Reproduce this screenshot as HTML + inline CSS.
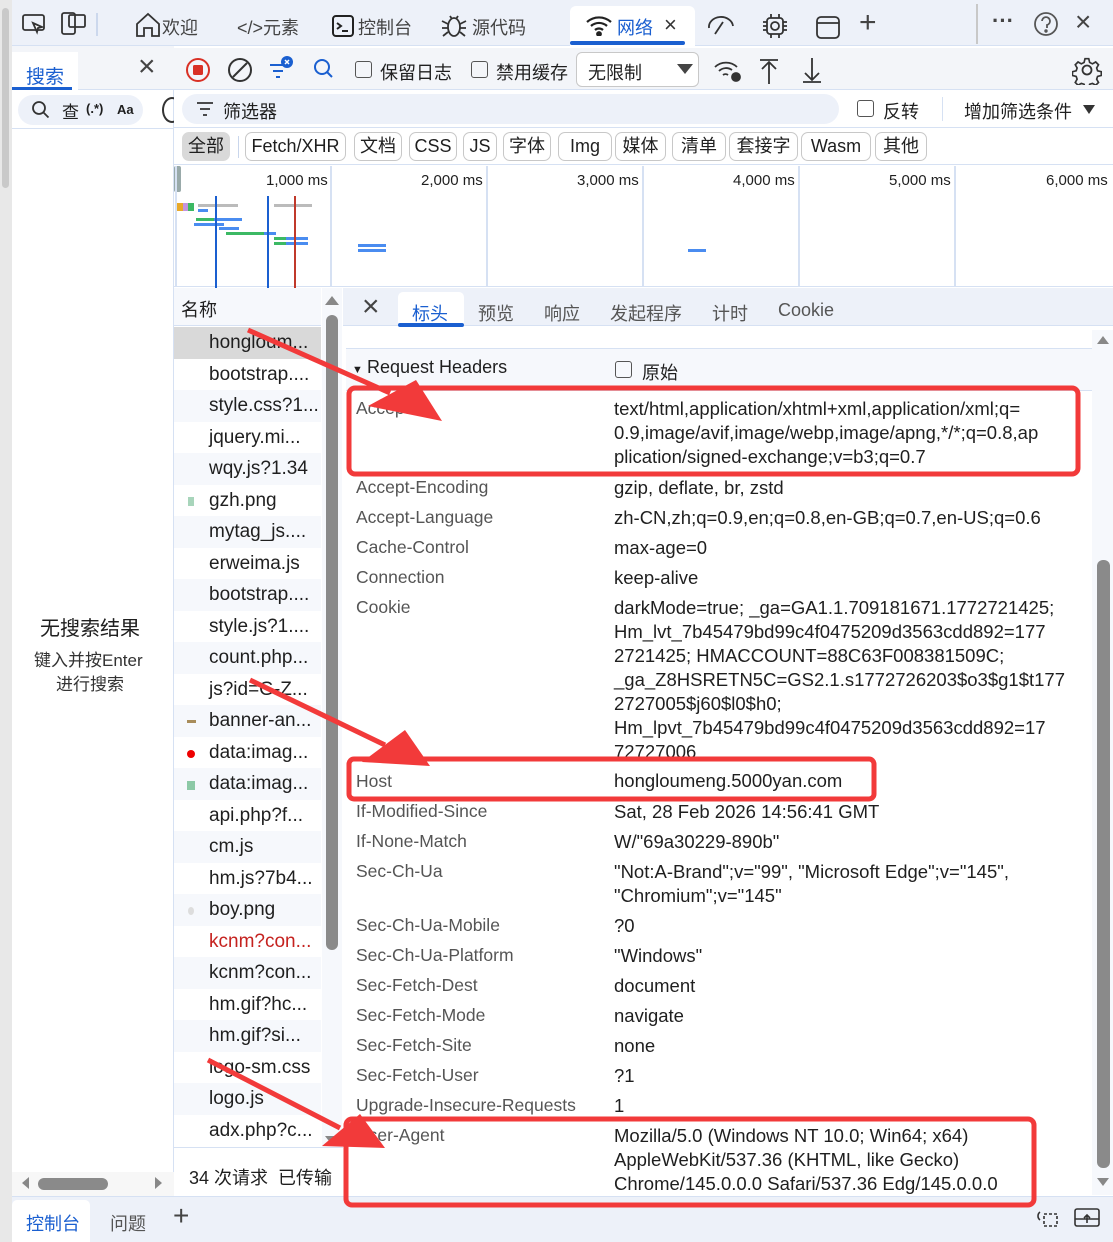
<!DOCTYPE html>
<html><head><meta charset="utf-8">
<style>
*{margin:0;padding:0;box-sizing:border-box}
body{width:1113px;height:1242px;overflow:hidden;background:#fff;font-family:"Liberation Sans","Noto Sans CJK SC",sans-serif;color:#1f1f1f;position:relative}
.a{position:absolute;white-space:nowrap}
.f18{font-size:18px}
.chip{position:absolute;top:132px;height:29px;border:1px solid #c8c8c8;border-radius:7px;font-size:18px;line-height:27px;text-align:center;background:#fff}
.row{position:absolute;left:174px;width:147px;height:31.5px;font-size:19px;line-height:31px;padding-left:35px}
.k{position:absolute;left:356px;font-size:17.5px;color:#555}
.v{position:absolute;left:614px;font-size:18.5px;color:#1f1f1f;line-height:24px}
</style></head><body>
<div class="a" style="left:0;top:0;width:1113px;height:46px;background:#edf1f9;border-bottom:1px solid #d6e1f3"></div>
<div class="a" style="left:0;top:0;width:12px;height:1242px;background:#e8e8e8"></div>
<div class="a" style="left:2px;top:8px;width:7px;height:180px;background:#c9c9c9;border-radius:4px"></div>
<svg class="a" style="left:20px;top:10px" width="120" height="30" fill="none" stroke="#333" stroke-width="1.8">
<rect x="3" y="5" width="21" height="15" rx="2"/><path d="M13 13l9 4-4 1-1 4z" fill="#fff"/>
<rect x="42" y="3" width="13" height="21" rx="2"/><rect x="49" y="5" width="16" height="12" rx="1.5"/>
<line x1="77" y1="3" x2="77" y2="26" stroke="#c9d6ec"/>
</svg>
<svg class="a" style="left:134px;top:11px" width="28" height="28" fill="none" stroke="#333" stroke-width="1.8"><path d="M3 13L14 3l11 10v12h-7v-8h-8v8H3z"/></svg>
<div class="a f18" style="left:162px;top:14px;color:#444">欢迎</div>
<div class="a f18" style="left:237px;top:14px;color:#444">&lt;/&gt;元素</div>
<svg class="a" style="left:330px;top:13px" width="26" height="26" fill="none" stroke="#222" stroke-width="2"><rect x="3" y="3" width="20" height="20" rx="3"/><path d="M7 10l4 3-4 3M12 18h6"/></svg>
<div class="a f18" style="left:358px;top:14px;color:#444">控制台</div>
<svg class="a" style="left:440px;top:12px" width="28" height="28" fill="none" stroke="#333" stroke-width="1.8"><ellipse cx="14" cy="15" rx="6" ry="9"/><path d="M2 9l6 3M2 16h6M3 24l5-4M26 9l-6 3M26 16h-6M25 24l-5-4M10 4l2 3M18 4l-2 3"/></svg>
<div class="a f18" style="left:472px;top:14px;color:#444">源代码</div>
<div class="a" style="left:570px;top:6px;width:125px;height:42px;background:#fff;border-radius:6px 6px 0 0"></div>
<div class="a" style="left:570px;top:41px;width:115px;height:4px;background:#1a5fd0;border-radius:2px"></div>
<svg class="a" style="left:585px;top:14px" width="30" height="22" fill="none" stroke="#222" stroke-width="2.2"><path d="M2 8a18 18 0 0 1 24 0M6 12a12 12 0 0 1 16 0M10 16a6 6 0 0 1 8 0"/><circle cx="14" cy="20" r="1.8" fill="#222"/></svg>
<div class="a f18" style="left:617px;top:14px;color:#1a5fd0">网络</div>
<div class="a" style="left:664px;top:12px;font-size:22px;color:#333">×</div>
<svg class="a" style="left:705px;top:12px" width="150" height="28" fill="none" stroke="#333" stroke-width="1.8">
<path d="M4 16a12 10 0 0 1 24-2M10 22l8-12"/>
<rect x="62" y="6" width="16" height="16" rx="3"/><circle cx="70" cy="14" r="4"/><path d="M58 10h4M58 14h4M58 18h4M78 10h4M78 14h4M78 18h4M66 2v4M74 2v4M66 22v4M74 22v4"/>
<rect x="112" y="5" width="22" height="21" rx="4"/><path d="M112 11h22"/>
</svg>
<div class="a" style="left:859px;top:6px;font-size:30px;color:#444;font-weight:300">+</div>
<div class="a" style="left:976px;top:4px;width:2px;height:40px;background:#c8c8c8"></div>
<div class="a" style="left:992px;top:8px;font-size:22px;color:#444;font-weight:bold">···</div>
<svg class="a" style="left:1032px;top:10px" width="28" height="28" fill="none" stroke="#555" stroke-width="1.8"><circle cx="14" cy="14" r="11"/><path d="M10 11a4 4 0 1 1 5 4v3"/><circle cx="14" cy="21" r=".8"/></svg>
<div class="a" style="left:1075px;top:6px;font-size:28px;color:#444">×</div>

<div class="a" style="left:12px;top:48px;width:162px;height:1150px;background:#fff;border-right:1px solid #d6e1f3"></div>
<div class="a" style="left:12px;top:46px;width:162px;height:44px;background:#f3f5f9;border-bottom:1px solid #d6e1f3"></div>
<div class="a" style="left:12px;top:52px;width:66px;height:38px;background:#fff"></div>
<div class="a f18" style="left:26px;top:62px;color:#1a5fd0;font-size:19px">搜索</div>
<div class="a" style="left:12px;top:87px;width:60px;height:3px;background:#1a5fd0"></div>
<div class="a" style="left:138px;top:50px;font-size:30px;color:#444">×</div>
<div class="a" style="left:18px;top:95px;width:125px;height:30px;background:#edf1f9;border-radius:15px"></div>
<svg class="a" style="left:30px;top:99px" width="22" height="22" fill="none" stroke="#333" stroke-width="1.8"><circle cx="9" cy="9" r="6"/><path d="M13.5 13.5l5 5"/></svg>
<div class="a" style="left:62px;top:98px;font-size:17px">查</div>
<div class="a" style="left:86px;top:101px;font-size:13px;font-weight:bold">(.*)</div>
<div class="a" style="left:117px;top:102px;font-size:13px;font-weight:bold">Aa</div>
<div class="a" style="left:162px;top:97px;width:20px;height:26px;border:2px solid #333;border-radius:50%"></div>
<div class="a" style="left:12px;top:128px;width:162px;height:1px;background:#d6e1f3"></div>
<div class="a" style="left:40px;top:612px;font-size:20px">无搜索结果</div>
<div class="a" style="left:34px;top:646px;font-size:17px;color:#333">键入并按Enter</div>
<div class="a" style="left:56px;top:670px;font-size:17px;color:#333">进行搜索</div>
<div class="a" style="left:12px;top:1172px;width:162px;height:24px;background:#f7f7f7"></div>
<div class="a" style="left:22px;top:1177px;width:0;height:0;border:6px solid transparent;border-right:7px solid #888;border-left:0"></div>
<div class="a" style="left:38px;top:1178px;width:70px;height:12px;background:#8a8a8a;border-radius:6px"></div>
<div class="a" style="left:155px;top:1177px;width:0;height:0;border:6px solid transparent;border-left:7px solid #888;border-right:0"></div>

<div class="a" style="left:174px;top:48px;width:939px;height:42px;background:#f3f5f9;border-bottom:1px solid #d6e1f3"></div>
<svg class="a" style="left:184px;top:55px" width="150" height="30" fill="none" stroke-width="2">
<circle cx="14" cy="15" r="11" stroke="#d93025"/><rect x="9" y="10" width="10" height="10" rx="1.5" fill="#d93025"/>
<circle cx="56" cy="15" r="11" stroke="#333"/><path d="M49 22l14-14" stroke="#333"/>
<path d="M86 10h16M89 16h10M92 22h4" stroke="#1a5fd0"/><circle cx="103" cy="7" r="6" fill="#1a5fd0"/><path d="M101 5l4 4M105 5l-4 4" stroke="#fff" stroke-width="1.5"/>
<circle cx="138" cy="12" r="7" stroke="#1a5fd0"/><path d="M143 17l5 5" stroke="#1a5fd0"/>
</svg>
<div class="a" style="left:355px;top:61px;width:17px;height:17px;border:1.5px solid #555;border-radius:3px"></div>
<div class="a f18" style="left:380px;top:59px">保留日志</div>
<div class="a" style="left:471px;top:61px;width:17px;height:17px;border:1.5px solid #555;border-radius:3px"></div>
<div class="a f18" style="left:496px;top:59px">禁用缓存</div>
<div class="a" style="left:576px;top:52px;width:123px;height:35px;border:1px solid #c8c8c8;border-radius:6px;background:#fff"></div>
<div class="a f18" style="left:588px;top:59px">无限制</div>
<div class="a" style="left:677px;top:64px;border:8px solid transparent;border-top:10px solid #444;border-bottom:0"></div>
<svg class="a" style="left:712px;top:56px" width="120" height="30" fill="none" stroke="#333" stroke-width="1.8">
<path d="M3 11a16 16 0 0 1 22 0M7 15a10 10 0 0 1 13-1M11 19a4 4 0 0 1 5 0"/><circle cx="24" cy="21" r="4" fill="#333"/>
<path d="M48 4h18M57 6v22M50 13l7-7 7 7"/>
<path d="M91 26h18M100 2v22M93 17l7 7 7-7"/>
</svg>
<svg class="a" style="left:1072px;top:55px" width="30" height="30" fill="none" stroke="#333" stroke-width="1.8"><circle cx="15" cy="15" r="4.5"/><path d="M13 3h4l1 4 3 1.5 3.5-2 3 3-2 3.5 1 3 4 1v4l-4 1-1 3 2 3.5-3 3-3.5-2-3 1-1 4h-4l-1-4-3-1-3.5 2-3-3 2-3.5-1-3-4-1v-4l4-1 1-3-2-3.5 3-3 3.5 2 3-1.5z" transform="scale(.93) translate(1 1)"/></svg>

<div class="a" style="left:174px;top:90px;width:939px;height:38px;background:#fff;border-bottom:1px solid #d6e1f3"></div>
<div class="a" style="left:182px;top:94px;width:657px;height:30px;background:#edf1f9;border-radius:15px"></div>
<svg class="a" style="left:195px;top:100px" width="20" height="18" stroke="#333" stroke-width="1.8"><path d="M2 3h16M5 9h10M8 15h4"/></svg>
<div class="a f18" style="left:223px;top:98px">筛选器</div>
<div class="a" style="left:857px;top:100px;width:17px;height:17px;border:1.5px solid #555;border-radius:3px"></div>
<div class="a f18" style="left:883px;top:98px">反转</div>
<div class="a" style="left:942px;top:97px;width:1px;height:24px;background:#d6e1f3"></div>
<div class="a f18" style="left:964px;top:98px">增加筛选条件</div>
<div class="a" style="left:1083px;top:105px;border:6px solid transparent;border-top:9px solid #333;border-bottom:0"></div>

<div class="a" style="left:174px;top:128px;width:939px;height:37px;background:#fff;border-bottom:1px solid #d6e1f3"></div>
<div class="chip" style="left:182px;width:48px;background:#d9d9d9;border-color:#d9d9d9">全部</div>
<div class="a" style="left:238px;top:136px;width:1px;height:22px;background:#c9d6ec"></div>
<div class="chip" style="left:245px;width:101px">Fetch/XHR</div>
<div class="chip" style="left:354px;width:48px">文档</div>
<div class="chip" style="left:409px;width:48px">CSS</div>
<div class="chip" style="left:463px;width:34px">JS</div>
<div class="chip" style="left:503px;width:48px">字体</div>
<div class="chip" style="left:558px;width:54px">Img</div>
<div class="chip" style="left:615px;width:51px">媒体</div>
<div class="chip" style="left:672px;width:54px">清单</div>
<div class="chip" style="left:729px;width:69px">套接字</div>
<div class="chip" style="left:801px;width:70px">Wasm</div>
<div class="chip" style="left:875px;width:52px">其他</div>

<div class="a" style="left:174px;top:166px;width:939px;height:121px;background:#fff;border-bottom:1px solid #d6e1f3"></div>
<div class="a" style="left:174px;top:166px;width:7px;height:26px;background:#9aa;border-radius:2px"></div>
<div class="a" style="left:330px;top:166px;width:2px;height:121px;background:#d6e1f3"></div>
<div class="a" style="left:486px;top:166px;width:2px;height:121px;background:#d6e1f3"></div>
<div class="a" style="left:642px;top:166px;width:2px;height:121px;background:#d6e1f3"></div>
<div class="a" style="left:798px;top:166px;width:2px;height:121px;background:#d6e1f3"></div>
<div class="a" style="left:954px;top:166px;width:2px;height:121px;background:#d6e1f3"></div>
<div class="a" style="left:175px;top:166px;width:2px;height:121px;background:#d6e1f3"></div>
<div class="a" style="left:266px;top:172px;font-size:15px">1,000 ms</div>
<div class="a" style="left:421px;top:172px;font-size:15px">2,000 ms</div>
<div class="a" style="left:577px;top:172px;font-size:15px">3,000 ms</div>
<div class="a" style="left:733px;top:172px;font-size:15px">4,000 ms</div>
<div class="a" style="left:889px;top:172px;font-size:15px">5,000 ms</div>
<div class="a" style="left:1046px;top:172px;font-size:15px">6,000 ms</div>
<svg class="a" style="left:174px;top:196px" width="150" height="92">
<rect x="3" y="7" width="6" height="8" fill="#e8a92a"/><rect x="9" y="7" width="5" height="8" fill="#c493e0"/><rect x="14" y="7" width="6" height="8" fill="#3cb964"/>
<rect x="24" y="8" width="40" height="3" fill="#bbb"/><rect x="24" y="13" width="10" height="3" fill="#4a8cf0"/>
<rect x="100" y="8" width="38" height="3" fill="#bbb"/>
<rect x="22" y="22" width="45" height="3" fill="#3cb964"/><rect x="40" y="22" width="28" height="3" fill="#4a8cf0"/>
<rect x="20" y="27" width="30" height="3" fill="#4a8cf0"/>
<rect x="45" y="31" width="20" height="3" fill="#4a8cf0"/>
<rect x="52" y="36" width="50" height="3" fill="#3cb964"/><rect x="90" y="36" width="12" height="3" fill="#4a8cf0"/>
<rect x="100" y="41" width="12" height="3" fill="#3cb964"/><rect x="112" y="41" width="22" height="3" fill="#4a8cf0"/>
<rect x="100" y="46" width="12" height="3" fill="#3cb964"/><rect x="112" y="46" width="22" height="3" fill="#4a8cf0"/>
<rect x="41" y="0" width="2" height="92" fill="#1a5fd0"/><rect x="93" y="0" width="2" height="92" fill="#1a5fd0"/><rect x="120" y="0" width="2" height="92" fill="#c0392b"/>
</svg>
<div class="a" style="left:358px;top:244px;width:28px;height:3px;background:#4a8cf0"></div>
<div class="a" style="left:358px;top:249px;width:28px;height:3px;background:#4a8cf0"></div>
<div class="a" style="left:688px;top:249px;width:18px;height:3px;background:#4a8cf0"></div>

<div class="a" style="left:174px;top:288px;width:168px;height:870px;background:#fff;border-right:1px solid #d6e1f3"></div>
<div class="a" style="left:174px;top:288px;width:147px;height:38px;background:#f6f8fc;border-bottom:1px solid #d6e1f3"></div>
<div class="a f18" style="left:181px;top:296px">名称</div>
<div class="a" style="left:322px;top:288px;width:20px;height:870px;background:#f6f8fc"></div>
<div class="a" style="left:325px;top:296px;border:7px solid transparent;border-bottom:9px solid #888;border-top:0"></div>
<div class="a" style="left:326px;top:315px;width:12px;height:635px;background:#8a8a8a;border-radius:6px"></div>
<div class="a" style="left:325px;top:1136px;border:7px solid transparent;border-top:9px solid #888;border-bottom:0"></div>
<div class="row" style="top:327px;background:#d9d9d9">hongloum...</div>
<div class="row" style="top:358.5px">bootstrap....</div>
<div class="row" style="top:390px;background:#f6f8fc">style.css?1...</div>
<div class="row" style="top:421.5px">jquery.mi...</div>
<div class="row" style="top:453px;background:#f6f8fc">wqy.js?1.34</div>
<div class="row" style="top:484.5px">gzh.png</div>
<div class="row" style="top:516px;background:#f6f8fc">mytag_js....</div>
<div class="row" style="top:547.5px">erweima.js</div>
<div class="row" style="top:579px;background:#f6f8fc">bootstrap....</div>
<div class="row" style="top:610.5px">style.js?1....</div>
<div class="row" style="top:642px;background:#f6f8fc">count.php...</div>
<div class="row" style="top:673.5px">js?id=G-Z...</div>
<div class="row" style="top:705px;background:#f6f8fc">banner-an...</div>
<div class="row" style="top:736.5px">data:imag...</div>
<div class="row" style="top:768px;background:#f6f8fc">data:imag...</div>
<div class="row" style="top:799.5px">api.php?f...</div>
<div class="row" style="top:831px;background:#f6f8fc">cm.js</div>
<div class="row" style="top:862.5px">hm.js?7b4...</div>
<div class="row" style="top:894px;background:#f6f8fc">boy.png</div>
<div class="row" style="top:925.5px;color:#c5221f">kcnm?con...</div>
<div class="row" style="top:957px;background:#f6f8fc">kcnm?con...</div>
<div class="row" style="top:988.5px">hm.gif?hc...</div>
<div class="row" style="top:1020px;background:#f6f8fc">hm.gif?si...</div>
<div class="row" style="top:1051.5px">logo-sm.css</div>
<div class="row" style="top:1083px;background:#f6f8fc">logo.js</div>
<div class="row" style="top:1114.5px">adx.php?c...</div>
<div class="a" style="left:188px;top:497px;width:6px;height:9px;background:#a8d5bb"></div>
<div class="a" style="left:187px;top:720px;width:9px;height:3px;background:#a88c5a"></div>
<div class="a" style="left:187px;top:750px;width:8px;height:8px;background:#e00;border-radius:50%"></div>
<div class="a" style="left:187px;top:781px;width:8px;height:9px;background:#8cc9a6"></div>
<div class="a" style="left:188px;top:907px;width:6px;height:8px;background:#ddd;border-radius:50%"></div>
<div class="a" style="left:174px;top:1147px;width:169px;height:48px;background:#fff;border-top:1px solid #d6e1f3"></div>
<div class="a f18" style="left:189px;top:1164px">34 次请求 &nbsp;已传输</div>

<div class="a" style="left:343px;top:288px;width:770px;height:38px;background:#edf1f9;border-bottom:1px solid #d6e1f3"></div>
<div class="a" style="left:362px;top:290px;font-size:30px;color:#444">×</div>
<div class="a" style="left:398px;top:292px;width:66px;height:34px;background:#fff;border-radius:5px 5px 0 0"></div>
<div class="a" style="left:398px;top:323px;width:66px;height:4px;background:#1a5fd0;border-radius:2px"></div>
<div class="a f18" style="left:412px;top:300px;color:#1a5fd0">标头</div>
<div class="a f18" style="left:478px;top:300px;color:#555">预览</div>
<div class="a f18" style="left:544px;top:300px;color:#555">响应</div>
<div class="a f18" style="left:610px;top:300px;color:#555">发起程序</div>
<div class="a f18" style="left:712px;top:300px;color:#555">计时</div>
<div class="a f18" style="left:778px;top:300px;color:#555">Cookie</div>
<div class="a" style="left:346px;top:348px;width:746px;height:1px;background:#d6e1f3"></div>
<div class="a" style="left:346px;top:349px;width:746px;height:42px;background:#f6f8fc;border-bottom:1px solid #d6e1f3"></div>
<div class="a" style="left:352px;top:364px;font-size:11px">▼</div>
<div class="a f18" style="left:367px;top:357px">Request Headers</div>
<div class="a" style="left:615px;top:361px;width:17px;height:17px;border:1.5px solid #555;border-radius:3px"></div>
<div class="a f18" style="left:642px;top:359px">原始</div>
<div class="a" style="left:1092px;top:330px;width:21px;height:865px;background:#f6f8fc"></div>
<div class="a" style="left:1097px;top:336px;border:6px solid transparent;border-bottom:8px solid #888;border-top:0"></div>
<div class="a" style="left:1097px;top:560px;width:13px;height:608px;background:#8a8a8a;border-radius:6px"></div>
<div class="a" style="left:1097px;top:1178px;border:6px solid transparent;border-top:8px solid #888;border-bottom:0"></div>

<div class="k" style="top:398px">Accept</div>
<div class="v" style="top:397px">text/html,application/xhtml+xml,application/xml;q=<br>0.9,image/avif,image/webp,image/apng,*/*;q=0.8,ap<br>plication/signed-exchange;v=b3;q=0.7</div>
<div class="k" style="top:477px">Accept-Encoding</div><div class="v" style="top:476px">gzip, deflate, br, zstd</div>
<div class="k" style="top:507px">Accept-Language</div><div class="v" style="top:506px">zh-CN,zh;q=0.9,en;q=0.8,en-GB;q=0.7,en-US;q=0.6</div>
<div class="k" style="top:537px">Cache-Control</div><div class="v" style="top:536px">max-age=0</div>
<div class="k" style="top:567px">Connection</div><div class="v" style="top:566px">keep-alive</div>
<div class="k" style="top:597px">Cookie</div>
<div class="v" style="top:596px">darkMode=true; _ga=GA1.1.709181671.1772721425;<br>Hm_lvt_7b45479bd99c4f0475209d3563cdd892=177<br>2721425; HMACCOUNT=88C63F008381509C;<br>_ga_Z8HSRETN5C=GS2.1.s1772726203$o3$g1$t177<br>2727005$j60$l0$h0;<br>Hm_lpvt_7b45479bd99c4f0475209d3563cdd892=17<br>72727006</div>
<div class="a" style="left:346px;top:758px;width:746px;height:42px;background:#fff"></div>
<div class="k" style="top:771px">Host</div><div class="v" style="top:769px">hongloumeng.5000yan.com</div>
<div class="k" style="top:801px">If-Modified-Since</div><div class="v" style="top:800px">Sat, 28 Feb 2026 14:56:41 GMT</div>
<div class="k" style="top:831px">If-None-Match</div><div class="v" style="top:830px">W/"69a30229-890b"</div>
<div class="k" style="top:861px">Sec-Ch-Ua</div><div class="v" style="top:860px">"Not:A-Brand";v="99", "Microsoft Edge";v="145",<br>"Chromium";v="145"</div>
<div class="k" style="top:915px">Sec-Ch-Ua-Mobile</div><div class="v" style="top:914px">?0</div>
<div class="k" style="top:945px">Sec-Ch-Ua-Platform</div><div class="v" style="top:944px">"Windows"</div>
<div class="k" style="top:975px">Sec-Fetch-Dest</div><div class="v" style="top:974px">document</div>
<div class="k" style="top:1005px">Sec-Fetch-Mode</div><div class="v" style="top:1004px">navigate</div>
<div class="k" style="top:1035px">Sec-Fetch-Site</div><div class="v" style="top:1034px">none</div>
<div class="k" style="top:1065px">Sec-Fetch-User</div><div class="v" style="top:1064px">?1</div>
<div class="k" style="top:1095px">Upgrade-Insecure-Requests</div><div class="v" style="top:1094px">1</div>
<div class="k" style="top:1125px">User-Agent</div>
<div class="v" style="top:1124px">Mozilla/5.0 (Windows NT 10.0; Win64; x64)<br>AppleWebKit/537.36 (KHTML, like Gecko)<br>Chrome/145.0.0.0 Safari/537.36 Edg/145.0.0.0</div>

<div class="a" style="left:12px;top:1196px;width:1101px;height:46px;background:#edf1f9;border-top:1px solid #d6e1f3"></div>
<div class="a" style="left:12px;top:1200px;width:78px;height:42px;background:#fff;border-radius:5px 5px 0 0"></div>
<div class="a f18" style="left:26px;top:1210px;color:#1a5fd0">控制台</div>
<div class="a f18" style="left:110px;top:1210px;color:#555">问题</div>
<div class="a" style="left:173px;top:1200px;font-size:28px;color:#444">+</div>
<svg class="a" style="left:1032px;top:1205px" width="75" height="26" fill="none" stroke="#333" stroke-width="1.6">
<path d="M8 7a5 5 0 0 0 0 8" /><rect x="12" y="9" width="13" height="12" stroke-dasharray="3 2"/>
<rect x="43" y="4" width="24" height="17" rx="2"/><path d="M43 14h24M55 18v-8M52 13l3-3 3 3"/>
</svg>

<svg class="a" style="left:0;top:0" width="1113" height="1242" fill="none">
<rect x="349" y="388" width="729" height="86" rx="6" stroke="#f23a3a" stroke-width="5"/>
<rect x="349" y="759" width="525" height="40" rx="5" stroke="#f23a3a" stroke-width="5"/>
<rect x="346" y="1119" width="688" height="86" rx="6" stroke="#f23a3a" stroke-width="5"/>
<path d="M248 330 L390 393" stroke="#f23a3a" stroke-width="5"/>
<polygon points="368,406 416,380 442,421" fill="#f23a3a"/>
<path d="M250 680 L385 745" stroke="#f23a3a" stroke-width="5"/>
<polygon points="362,762 405,730 430,766" fill="#f23a3a"/>
<path d="M208 1060 L340 1128" stroke="#f23a3a" stroke-width="5"/>
<polygon points="322,1146 360,1114 385,1148" fill="#f23a3a"/>
</svg>
</body></html>
